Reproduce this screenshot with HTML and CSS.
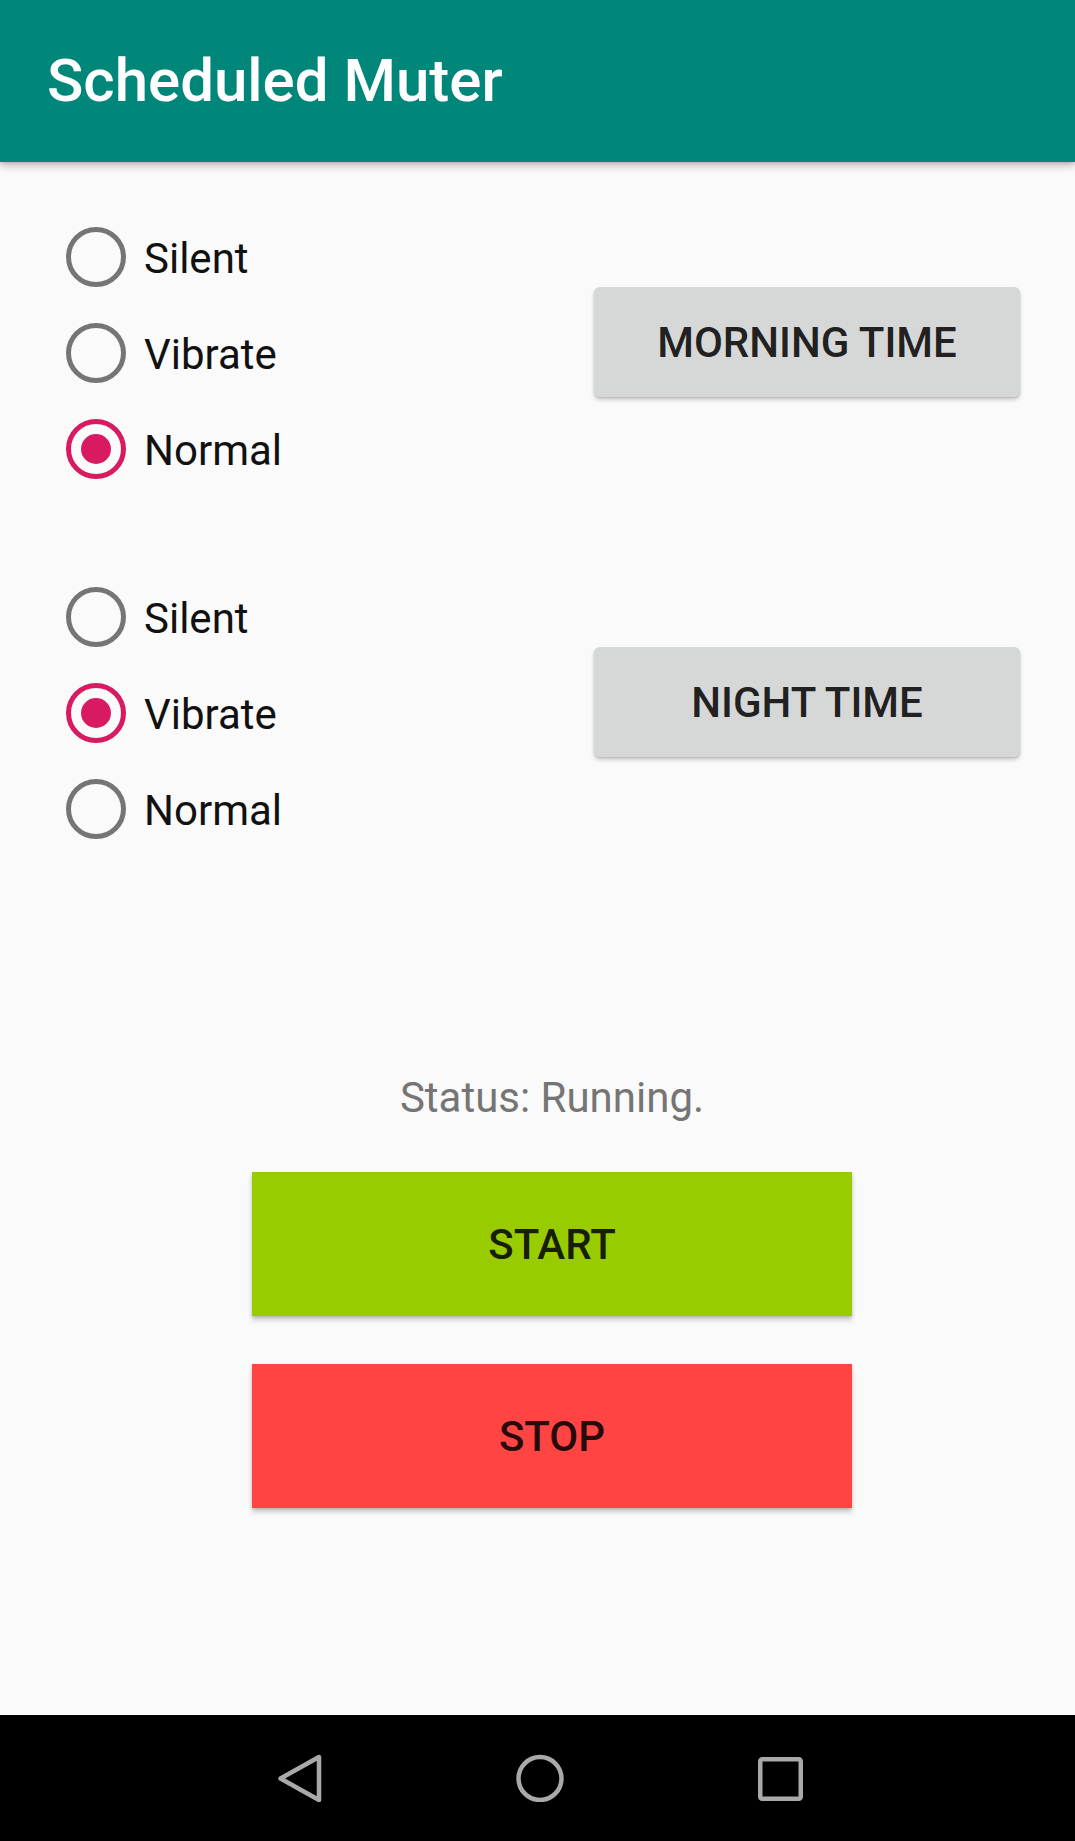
FILE: index.html
```html
<!DOCTYPE html>
<html>
<head>
<meta charset="utf-8">
<link rel="stylesheet" href="styles.css">
</head>
<body>
<div class="screen">
  <header class="appbar">
    <h1 class="title">Scheduled Muter</h1>
  </header>
  <main class="content">
    <section class="row">
      <div class="radio-group">
        <div class="radio"><span class="ring"></span><span class="label">Silent</span></div>
        <div class="radio"><span class="ring"></span><span class="label">Vibrate</span></div>
        <div class="radio"><span class="ring checked"></span><span class="label">Normal</span></div>
      </div>
      <button class="time-btn">MORNING TIME</button>
    </section>
    <section class="row second">
      <div class="radio-group">
        <div class="radio"><span class="ring"></span><span class="label">Silent</span></div>
        <div class="radio"><span class="ring checked"></span><span class="label">Vibrate</span></div>
        <div class="radio"><span class="ring"></span><span class="label">Normal</span></div>
      </div>
      <button class="time-btn">NIGHT TIME</button>
    </section>
    <section class="controls">
      <div class="status">Status: Running.</div>
      <button class="big-btn start">START</button>
      <button class="big-btn stop">STOP</button>
    </section>
  </main>
  <nav class="navbar">
    <svg class="nav-icon" width="48" height="48" viewBox="0 0 48 48">
      <polygon points="43,3 43,46 4.5,24.5" fill="none" stroke="#a9a9a9" stroke-width="4.5" stroke-linejoin="round"/>
    </svg>
    <svg class="nav-icon" width="48" height="48" viewBox="0 0 48 48">
      <circle cx="24" cy="24.5" r="21.5" fill="none" stroke="#a9a9a9" stroke-width="4.5"/>
    </svg>
    <svg class="nav-icon" width="48" height="48" viewBox="0 0 48 48">
      <rect x="4.25" y="5.25" width="40.5" height="39.5" rx="2" fill="none" stroke="#a9a9a9" stroke-width="4.5"/>
    </svg>
  </nav>
</div>
</body>
</html>
```
FILE: styles.css
```css
* { box-sizing: border-box; }
html, body { margin: 0; padding: 0; }
body {
  background: #fafafa;
  font-family: Roboto, "Noto Sans", "Liberation Sans", sans-serif;
}
.screen {
  width: 1075px;
  height: 1841px;
  display: flex;
  flex-direction: column;
  overflow: hidden;
}
.appbar {
  height: 162px;
  flex: 0 0 162px;
  background: #00877a;
  padding-left: 47px;
  box-shadow: 0 4px 8px rgba(0,0,0,0.22), 0 1px 3px rgba(0,0,0,0.15);
  position: relative;
  z-index: 1;
}
.title {
  margin: 0;
  color: #ffffff;
  font-size: 60px;
  font-weight: 500;
  line-height: 162px;
}
.content {
  flex: 1;
  display: flex;
  flex-direction: column;
  padding-top: 47px;
}
.row {
  display: flex;
  justify-content: space-between;
  align-items: flex-start;
  padding-left: 66px;
  padding-right: 55px;
}
.row.second { margin-top: 72px; }
.radio-group {
  display: flex;
  flex-direction: column;
}
.radio {
  height: 96px;
  display: flex;
  align-items: center;
}
.ring {
  width: 60px;
  height: 60px;
  border-radius: 50%;
  border: 5.5px solid #757575;
  display: flex;
  align-items: center;
  justify-content: center;
}
.ring.checked { border-color: #d81b60; }
.ring.checked::after {
  content: "";
  width: 30px;
  height: 30px;
  border-radius: 50%;
  background: #d81b60;
}
.label {
  margin-left: 18px;
  font-size: 42px;
  color: #111111;
  padding-top: 3px;
}
.time-btn {
  margin-top: 78px;
  width: 426px;
  height: 110px;
  border: none;
  border-radius: 6px;
  background: #d6d7d7;
  font-family: Roboto, "Noto Sans", sans-serif;
  font-size: 42px;
  font-weight: 500;
  color: rgba(0,0,0,0.87);
  box-shadow: 0 3px 4px rgba(0,0,0,0.18), 0 1px 2px rgba(0,0,0,0.12);
  padding: 0;
}
.controls {
  width: 600px;
  margin-left: 252px;
  margin-top: 216px;
  display: flex;
  flex-direction: column;
  align-items: stretch;
}
.status {
  text-align: center;
  font-size: 42px;
  color: #757575;
  line-height: 49px;
}
.big-btn {
  height: 144px;
  border: none;
  border-radius: 0;
  font-family: Roboto, "Noto Sans", sans-serif;
  font-size: 42px;
  font-weight: 500;
  color: rgba(0,0,0,0.87);
  box-shadow: 0 4px 5px rgba(0,0,0,0.2), 0 1px 2px rgba(0,0,0,0.12);
  padding: 0;
}
.start { margin-top: 50px; background: #99cc00; }
.stop { margin-top: 48px; background: #ff4444; }
.navbar {
  height: 126px;
  flex: 0 0 126px;
  background: #000000;
  display: flex;
  align-items: center;
  justify-content: center;
  gap: 192px;
  padding-left: 5px;
}
.nav-icon { display: block; }
```
